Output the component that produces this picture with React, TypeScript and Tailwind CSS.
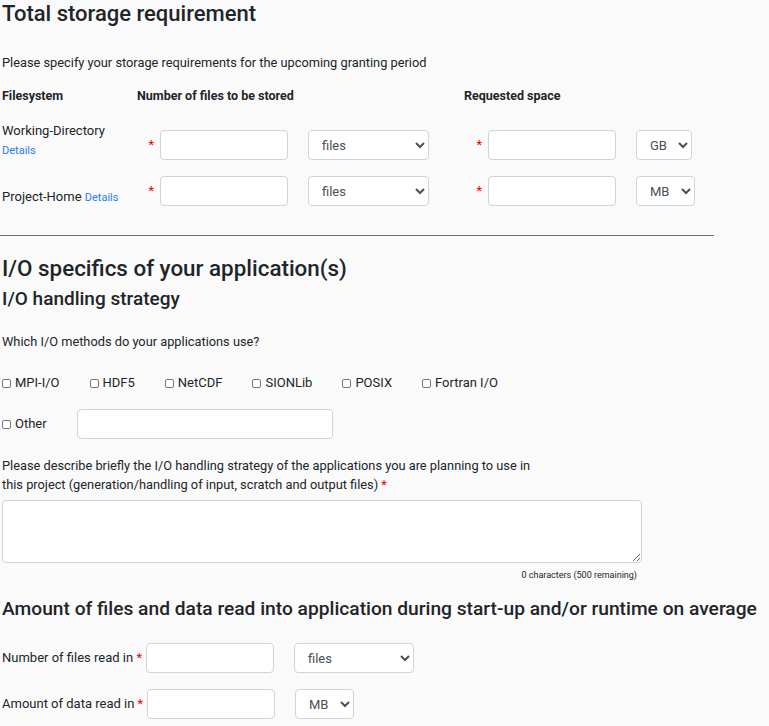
import React from "react";

const inputCls =
	"h-[30px] rounded-[4px] border border-[#ced4da] bg-white px-3 text-[13px] text-[#495057] outline-none";
const selectCls =
	"h-[30px] rounded-[4px] border border-[#ced4da] bg-white pl-[9px] pr-1 text-[13px] text-[#495057] outline-none";

function Star() {
	return <span className="text-[13px] text-[#e00]">*</span>;
}

function Check({ label }: { label: string }) {
	return (
		<label className="flex items-center gap-[4px] text-[13px]">
			<span className="inline-block h-[9px] w-[9px] rounded-[2px] border border-[#767676] bg-white" />
			{label}
		</label>
	);
}

function StorageRow({
	label,
	inlineDetails,
	unit,
	unitWidth,
}: {
	label: string;
	inlineDetails?: boolean;
	unit: string;
	unitWidth: string;
}) {
	return (
		<div className="flex h-[30px] items-center">
			<div className={"w-[135px] " + (inlineDetails ? "mt-[12px]" : "mb-[8px]")}>
				{inlineDetails ? (
					<div className="text-[13px] leading-[20px]">
						{label} <a className="text-[11px] text-[#2b7de9]">Details</a>
					</div>
				) : (
					<>
						<div className="text-[13px] leading-[20px]">{label}</div>
						<div className="text-[11px] leading-[20px] text-[#2b7de9]">Details</div>
					</>
				)}
			</div>
			<div className="flex w-[327px] items-center">
				<div className="flex w-[23px] justify-end pr-[6px]">
					<Star />
				</div>
				<input className={inputCls + " w-[128px]"} />
				<select className={selectCls + " ml-[20px] w-[121px]"}>
					<option>files</option>
				</select>
			</div>
			<div className="flex items-center">
				<div className="flex w-[24px] justify-end pr-[6px]">
					<Star />
				</div>
				<input className={inputCls + " w-[128px]"} />
				<select className={selectCls + " ml-[20px] " + unitWidth}>
					<option>{unit}</option>
				</select>
			</div>
		</div>
	);
}

export default function App() {
	return (
		<div className="min-h-screen bg-[#fafafa] pl-[2px] font-['Roboto',sans-serif] text-[#212529]">
			{/* Total storage */}
			<h1 className="h-[28px] text-[22px] font-medium leading-[28px]">Total storage requirement</h1>
			<p className="mt-[25px] text-[12.8px] leading-[20px]">
				Please specify your storage requirements for the upcoming granting period
			</p>

			<div className="mt-[13px] flex text-[12.5px] font-bold leading-[20px]">
				<div className="w-[135px]">Filesystem</div>
				<div className="w-[327px]">Number of files to be stored</div>
				<div>Requested space</div>
			</div>

			<div className="mt-[24px]">
				<StorageRow label="Working-Directory" unit="GB" unitWidth="w-[56px]" />
			</div>
			<div className="mt-[16px]">
				<StorageRow label="Project-Home" inlineDetails unit="MB" unitWidth="w-[59px]" />
			</div>

			<hr className="ml-[-2px] mt-[29px] w-[714px] border-0 border-t border-[#6e6e6e]" />

			{/* I/O specifics */}
			<h2 className="mt-[18px] text-[22.4px] font-medium leading-[28px]">
				I/O specifics of your application(s)
			</h2>
			<h3 className="mt-[5px] text-[19px] font-medium leading-[24px]">I/O handling strategy</h3>

			<p className="mt-[21px] text-[12.8px] leading-[20px]">Which I/O methods do your applications use?</p>

			<div className="mt-[21px] flex h-[20px] items-center gap-[30px]">
				<Check label="MPI-I/O" />
				<Check label="HDF5" />
				<Check label="NetCDF" />
				<Check label="SIONLib" />
				<Check label="POSIX" />
				<Check label="Fortran I/O" />
			</div>

			<div className="mt-[16px] flex h-[30px] items-center">
				<div className="w-[75px]">
					<Check label="Other" />
				</div>
				<input className={inputCls + " w-[256px]"} />
			</div>

			<p className="mt-[17px] w-[560px] text-[12.8px] leading-[19px]">
				Please describe briefly the I/O handling strategy of the applications you are planning to use in
				<br />
				this project (generation/handling of input, scratch and output files) <Star />
			</p>

			<textarea className="mt-[6px] block h-[63px] w-[640px] rounded-[4px] border border-[#ced4da] bg-white outline-none" />
			<div className="mt-[6px] w-[635px] text-right text-[9px] leading-[12px]">0 characters (500 remaining)</div>

			{/* Amount read */}
			<h4 className="mt-[16px] text-[19.2px] font-medium leading-[24px]">
				Amount of files and data read into application during start-up and/or runtime on average
			</h4>

			<div className="mt-[22px] flex h-[30px] items-center">
				<div className="w-[144px] text-[13px]">
					Number of files read in <Star />
				</div>
				<input className={inputCls + " w-[128px]"} />
				<select className={selectCls + " ml-[20px] w-[120px]"}>
					<option>files</option>
				</select>
			</div>
			<div className="mt-[16px] flex h-[30px] items-center">
				<div className="w-[145px] text-[13px]">
					Amount of data read in <Star />
				</div>
				<input className={inputCls + " w-[128px]"} />
				<select className={selectCls + " ml-[20px] w-[59px]"}>
					<option>MB</option>
				</select>
			</div>
		</div>
	);
}
